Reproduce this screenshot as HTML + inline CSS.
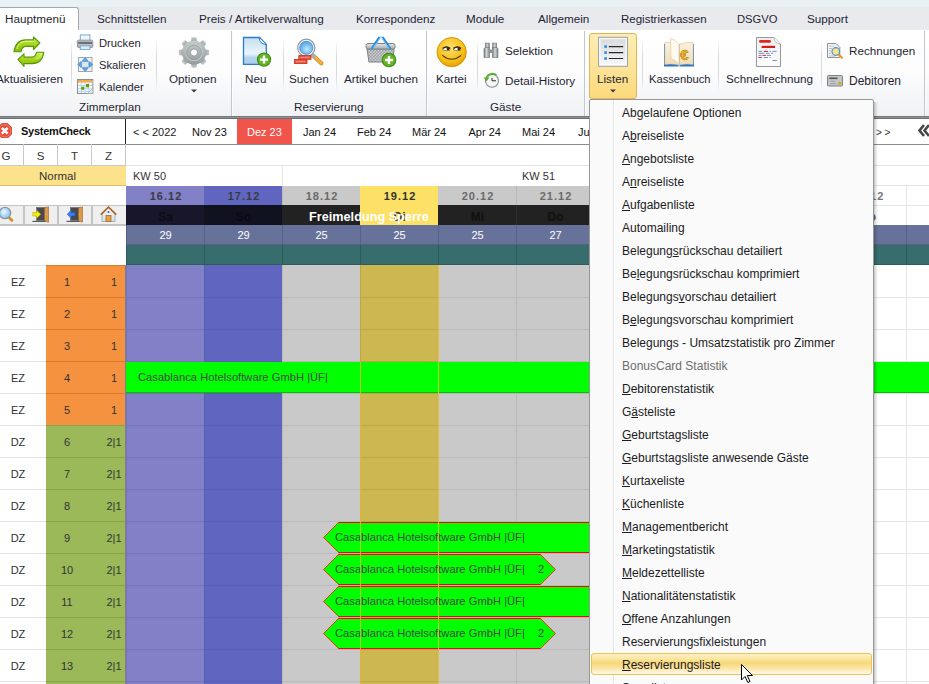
<!DOCTYPE html>
<html><head><meta charset="utf-8">
<style>
*{box-sizing:border-box;margin:0;padding:0}
html,body{width:929px;height:684px;overflow:hidden;background:#fff;font-family:"Liberation Sans",sans-serif;color:#2b2b33;position:relative}
.a{position:absolute;white-space:nowrap}
#topbar{left:0;top:0;width:929px;height:7px;background:#eaf1f5}
#tabs{left:0;top:7px;width:929px;height:24px;background:#e8eaee;border-bottom:1px solid #a9aeb4}
.tab{top:7px;font-size:11.7px;line-height:23px;color:#1f1f33}
#acttab{left:-1px;top:7px;width:80px;height:25px;background:#fff;border:1px solid #a3a9b0;border-bottom:none;border-radius:0 3px 0 0}
#ribbon{left:0;top:30px;width:929px;height:87px;background:linear-gradient(#fff 0%,#fcfcfd 50%,#eff1f4 100%)}
#ribline{left:0;top:116px;width:929px;height:3px;background:linear-gradient(#74777b 0,#74777b 33%,#8f9296 33%,#8f9296 66%,#6a6d71 66%)}
.rt{font-size:11.7px;color:#1f1f33}
.gl{font-size:11.7px;color:#1f1f33;top:100px}
.sep{width:1px;background:linear-gradient(rgba(200,203,208,0),#d8dadd 30%,#d8dadd 70%,rgba(200,203,208,0))}
.gsep{width:2px;top:31px;height:85px;background:linear-gradient(90deg,#c3c7cc 50%,#fbfcfd 50%)}


.dt{top:186px;height:19px;font-size:11px;font-weight:bold;line-height:21px;text-align:center;letter-spacing:1px;text-indent:1px}
.dy{top:205px;height:20px;font-size:12px;font-weight:bold;line-height:24px;text-align:center}
.nm{top:225px;height:20px;background:#67729a;border-left:1px solid #56618a;color:#fff;font-size:11px;line-height:21px;text-align:center}
.tl{top:245px;height:20px;background:#376d6c;border-left:1px solid #2b5b5a}
.lt{height:32px;line-height:34px;font-size:11px;color:#333;width:36px;text-align:center}
.hd{top:144px;height:21px;line-height:24px;font-size:11.5px;color:#333;text-align:center;width:34px;border-left:1px solid #c9c9c9}
.nv{top:124px;font-size:11px;color:#111;line-height:16px}
.mi{left:622px;font-size:12px;color:#1b1b23;line-height:16px}
.mi u{text-decoration:underline;text-decoration-thickness:1px;text-underline-offset:0.6px}
.bar{height:31px;background:#00ff00;font-size:11.2px;color:#474747;line-height:30px}
</style></head><body>

<div class="a" id="topbar"></div>
<div class="a" id="tabs"></div>
<div class="a" id="acttab"></div>
<div class="a tab" style="left:5px">Hauptmenü</div>
<div class="a tab" style="left:97px">Schnittstellen</div>
<div class="a tab" style="left:199px">Preis / Artikelverwaltung</div>
<div class="a tab" style="left:356px">Korrespondenz</div>
<div class="a tab" style="left:466px">Module</div>
<div class="a tab" style="left:538px">Allgemein</div>
<div class="a tab" style="left:621px;font-size:11.5px;line-height:24.5px">Registrierkassen</div>
<div class="a tab" style="left:737px;font-size:11.2px;line-height:24.5px">DSGVO</div>
<div class="a tab" style="left:807px">Support</div>

<div class="a" id="ribbon"></div>
<div class="a" id="ribline"></div>


<!-- Zimmerplan group -->
<svg class="a" style="left:10px;top:32px" width="40" height="40" viewBox="0 0 40 40">
<defs><linearGradient id="gr" x1="0" y1="0" x2="0" y2="1"><stop offset="0" stop-color="#d6f06a"/><stop offset="0.5" stop-color="#a9d21a"/><stop offset="1" stop-color="#86b80c"/></linearGradient></defs>
<path d="M4,19.8 C5,12 9,8 16,7.9 L23.5,7.9 L23.5,5 L29.8,11 L23.5,17.5 L23.5,14.4 L16,14.4 C13,14.4 11.5,16.5 11,19.8 Z" fill="url(#gr)" stroke="#4f9a06" stroke-width="1.1" stroke-linejoin="round"/>
<path d="M33.8,20.2 C33,27 29,31.6 22,31.6 L14,31.6 L14,34.5 L8,27.5 L14,21.9 L14,25.1 L22,25.1 C24.5,25.1 26,23 26.6,20.2 Z" fill="url(#gr)" stroke="#4f9a06" stroke-width="1.1" stroke-linejoin="round"/>
<path d="M7,17 C8,12 11,9.5 16,9.3 L24,9.3" stroke="#e8f8a8" stroke-width="1" fill="none" opacity="0.8"/>
<path d="M31.5,21.5 C31,24 29.5,26 26,26.5" stroke="#e8f8a8" stroke-width="1" fill="none" opacity="0.7"/>
</svg>
<div class="a rt" style="left:-4px;top:72px">Aktualisieren</div>
<div class="a sep" style="left:71px;top:40px;height:52px"></div>
<svg class="a" style="left:76px;top:34px" width="18" height="16" viewBox="0 0 18 16">
<defs><linearGradient id="gp" x1="0" y1="0" x2="0" y2="1"><stop offset="0" stop-color="#e6e8ea"/><stop offset="1" stop-color="#a4a9ad"/></linearGradient></defs>
<rect x="4.3" y="0.9" width="9.6" height="6" fill="#eef6fd" stroke="#7fa9d6" stroke-width="1"/>
<rect x="1.4" y="6.2" width="15.4" height="7.2" rx="1" fill="url(#gp)" stroke="#8d9296" stroke-width="1"/>
<rect x="2.2" y="7.6" width="13.8" height="2.4" fill="#6d7276"/>
<rect x="4.3" y="11.8" width="9.6" height="3.8" fill="#dcecfa" stroke="#7fa9d6" stroke-width="1"/>
</svg>
<div class="a rt" style="left:99px;top:37px;font-size:11.2px">Drucken</div>
<svg class="a" style="left:76px;top:56px" width="18" height="16" viewBox="0 0 18 16">
<rect x="2.5" y="1.5" width="13.5" height="14" fill="#f1f2f3" stroke="#a3a7ab" stroke-width="1"/>
<rect x="6" y="5" width="6.5" height="7" fill="#dfe6ec"/>
<path d="M9.2,1.6 L12,4.6 V5.6 H6.4 V4.6 Z M9.2,15.4 L12,12.4 V11.4 H6.4 V12.4 Z M1.6,8.5 L4.6,5.7 H5.6 V11.3 H4.6 Z M16.8,8.5 L13.8,5.7 H12.8 V11.3 H13.8 Z" fill="#5ba4e4" stroke="#3d84c6" stroke-width="0.5" stroke-linejoin="round"/>
</svg>
<div class="a rt" style="left:99px;top:59px;font-size:11.2px">Skalieren</div>
<svg class="a" style="left:76px;top:78px" width="18" height="17" viewBox="0 0 18 17">
<rect x="1.5" y="1.5" width="15.3" height="14" fill="#f7fafd" stroke="#8a9096" stroke-width="1"/>
<rect x="2" y="2" width="14.3" height="2.6" fill="#f7a84c"/>
<path d="M2,7.5 H16.3 M2,10.8 H16.3 M2,13.5 H16.3 M5.3,4.6 V15 M9,4.6 V15 M12.7,4.6 V15" stroke="#b9d5ea" stroke-width="1"/>
<rect x="5.2" y="8.7" width="3" height="3" fill="#5c9e0c"/>
<rect x="10" y="6" width="3" height="3.3" fill="#5c9e0c"/>
<path d="M11.5,15.5 L16.8,10.2 V15.5 Z" fill="#dfe7ef" stroke="#9aa3ab" stroke-width="0.6"/>
</svg>
<div class="a rt" style="left:99px;top:81px;font-size:11.2px">Kalender</div>
<div class="a sep" style="left:156px;top:40px;height:52px"></div>
<svg class="a" style="left:178px;top:35.5px" width="32" height="33" viewBox="0 0 32 32">
<defs><linearGradient id="gg" x1="0" y1="0" x2="0" y2="1"><stop offset="0" stop-color="#c4cbcb"/><stop offset="1" stop-color="#939b9c"/></linearGradient></defs>
<g fill="url(#gg)"><path d="M12.8,6 L13.6,0.8 H18.4 L19.2,6 Z" transform="rotate(0 16 16)"/><path d="M12.8,6 L13.6,0.8 H18.4 L19.2,6 Z" transform="rotate(45 16 16)"/><path d="M12.8,6 L13.6,0.8 H18.4 L19.2,6 Z" transform="rotate(90 16 16)"/><path d="M12.8,6 L13.6,0.8 H18.4 L19.2,6 Z" transform="rotate(135 16 16)"/><path d="M12.8,6 L13.6,0.8 H18.4 L19.2,6 Z" transform="rotate(180 16 16)"/><path d="M12.8,6 L13.6,0.8 H18.4 L19.2,6 Z" transform="rotate(225 16 16)"/><path d="M12.8,6 L13.6,0.8 H18.4 L19.2,6 Z" transform="rotate(270 16 16)"/><path d="M12.8,6 L13.6,0.8 H18.4 L19.2,6 Z" transform="rotate(315 16 16)"/><circle cx="16" cy="16" r="12"/></g>
<circle cx="16" cy="16" r="8.3" fill="none" stroke="#c3caca" stroke-width="1.1"/>
<circle cx="16" cy="16" r="7.3" fill="none" stroke="#939b9b" stroke-width="0.7"/>
<circle cx="16" cy="16" r="3.6" fill="#fff" stroke="#858d8e" stroke-width="0.8"/>
</svg>
<div class="a rt" style="left:169px;top:72px">Optionen</div>
<svg class="a" style="left:191px;top:89px" width="6" height="4"><path d="M0,0.5 H6 L3,3.5 Z" fill="#3a3f48"/></svg>
<div class="a gl" style="left:79px">Zimmerplan</div>
<div class="a gsep" style="left:231px"></div>

<!-- Reservierung -->
<svg class="a" style="left:242px;top:36px" width="31" height="31" viewBox="0 0 31 31">
<defs><linearGradient id="gd" x1="0" y1="0" x2="0" y2="1"><stop offset="0" stop-color="#c4def0"/><stop offset="0.6" stop-color="#eaf5fb"/><stop offset="0.75" stop-color="#b3d5ec"/><stop offset="1" stop-color="#a9cfea"/></linearGradient></defs>
<path d="M1.5,1.5 H17.5 L24.3,8.3 V28.3 H1.5 Z" fill="url(#gd)" stroke="#2b7dcc" stroke-width="1.3"/>
<path d="M17.3,2 Q17.5,8 24,8.4" fill="#f4f9fd" stroke="#2b7dcc" stroke-width="1"/>
<circle cx="22" cy="23.6" r="6.6" fill="#62b424" stroke="#3c8a12" stroke-width="1.1"/>
<path d="M22,19.6 V27.6 M18,23.6 H26" stroke="#fff" stroke-width="2.4"/>
</svg>
<div class="a rt" style="left:245px;top:72px">Neu</div>
<div class="a sep" style="left:283px;top:40px;height:52px"></div>
<svg class="a" style="left:292px;top:36px" width="32" height="30" viewBox="0 0 32 30">
<defs><radialGradient id="gs" cx="0.55" cy="0.6" r="0.6"><stop offset="0" stop-color="#bfe8ff"/><stop offset="1" stop-color="#4f9fe2"/></radialGradient></defs>
<path d="M21,19.5 L29.3,27.3" stroke="#c8891c" stroke-width="4" stroke-linecap="round"/>
<path d="M21,19.5 L29.3,27.3" stroke="#f4b23c" stroke-width="2.6" stroke-linecap="round"/>
<path d="M19.5,18 L23,21.5" stroke="#a9afb3" stroke-width="4"/>
<circle cx="14.3" cy="11.8" r="8.6" fill="#fafafa" stroke="#8f969b" stroke-width="1.2"/>
<circle cx="14.3" cy="11.8" r="6.6" fill="url(#gs)" stroke="#3d8bd2" stroke-width="0.8"/>
<rect x="6.8" y="19.6" width="12.2" height="3.7" fill="#ec5846" stroke="#c2301f" stroke-width="0.8"/>
<rect x="2.4" y="23.4" width="12.6" height="4.2" fill="#ec5846" stroke="#c2301f" stroke-width="0.8"/>
<path d="M8.5,21.4 H17 M4,25.5 H13" stroke="#ff9a8a" stroke-width="0.7"/>
</svg>
<div class="a rt" style="left:289px;top:72px">Suchen</div>
<div class="a sep" style="left:336px;top:40px;height:52px"></div>
<svg class="a" style="left:364px;top:35px" width="34" height="34" viewBox="0 0 34 34">
<defs><pattern id="chk" width="3" height="3" patternUnits="userSpaceOnUse"><rect width="3" height="3" fill="#c9cccf"/><rect width="1.5" height="1.5" fill="#9da2a6"/><rect x="1.5" y="1.5" width="1.5" height="1.5" fill="#9da2a6"/></pattern>
<linearGradient id="rim" x1="0" y1="0" x2="0" y2="1"><stop offset="0" stop-color="#e4e6e8"/><stop offset="1" stop-color="#a9aeb2"/></linearGradient></defs>
<path d="M15.5,2 L7,14 M18.5,2 L27,14" stroke="#2d8ee0" stroke-width="1.6"/>
<path d="M16.8,1.5 L8.8,13.6 M17.2,1.5 L25.2,13.6" stroke="#8cc8f4" stroke-width="0.8"/>
<path d="M3,14 H30 L28.6,27 H5 Z" fill="url(#chk)" stroke="#7d8387" stroke-width="1"/>
<rect x="2" y="8.5" width="29" height="5.5" rx="2" fill="url(#rim)" stroke="#7d8387" stroke-width="1"/>
<path d="M15.3,2 L7.3,14 M18.7,2 L26.7,14" stroke="#2d8ee0" stroke-width="1.7"/><path d="M16.6,2.5 L9.4,13.5 M17.4,2.5 L24.6,13.5" stroke="#7cc0f2" stroke-width="0.9"/>
<circle cx="25" cy="25" r="6.8" fill="#62b424" stroke="#3c8a12" stroke-width="1.1"/>
<path d="M25,21 V29 M21,25 H29" stroke="#fff" stroke-width="2.4"/>
</svg>
<div class="a rt" style="left:344px;top:72px">Artikel buchen</div>
<div class="a gl" style="left:294px">Reservierung</div>
<div class="a gsep" style="left:426px"></div>

<!-- Gaeste -->
<svg class="a" style="left:436px;top:36px" width="32" height="32" viewBox="0 0 32 32">
<defs><radialGradient id="gy" cx="0.45" cy="0.35" r="0.75"><stop offset="0" stop-color="#ffe170"/><stop offset="0.6" stop-color="#f6bf16"/><stop offset="1" stop-color="#e09400"/></radialGradient></defs>
<circle cx="15.7" cy="16.1" r="14.6" fill="url(#gy)" stroke="#d08a00" stroke-width="0.9"/>
<path d="M6.8,12.2 Q10.5,9.4 14,12.2 L13.8,14.3 Q10.5,15.3 6.8,14 Z" fill="#fff" stroke="#6b4a00" stroke-width="0.6"/>
<path d="M17.6,12.2 Q21.3,9.4 24.8,12.2 L24.6,14.3 Q21.3,15.3 17.6,14 Z" fill="#fff" stroke="#6b4a00" stroke-width="0.6"/>
<path d="M6.8,12.4 Q10.5,9.6 14,12.4" stroke="#3b2700" stroke-width="1.5" fill="none"/>
<path d="M17.6,12.4 Q21.3,9.6 24.8,12.4" stroke="#3b2700" stroke-width="1.5" fill="none"/>
<circle cx="12" cy="13" r="1.4" fill="#3b2700"/><circle cx="22.8" cy="13" r="1.4" fill="#3b2700"/>
<path d="M6.8,19.6 Q15.7,27 24.6,19.6" stroke="#5a3a00" stroke-width="1.1" fill="none"/>
<path d="M5.8,18.8 L7.4,20.3 M25.6,18.8 L24,20.3" stroke="#5a3a00" stroke-width="0.8"/>
</svg>
<div class="a rt" style="left:436px;top:72px">Kartei</div>
<div class="a sep" style="left:477px;top:40px;height:52px"></div>
<svg class="a" style="left:483px;top:42px" width="16" height="17" viewBox="0 0 16 17">
<defs><linearGradient id="gb" x1="0" y1="0" x2="1" y2="0"><stop offset="0" stop-color="#6e7478"/><stop offset="0.45" stop-color="#d6dadc"/><stop offset="1" stop-color="#7a8084"/></linearGradient></defs>
<rect x="2.3" y="1" width="4" height="5.5" fill="url(#gb)" stroke="#6a7074" stroke-width="0.5"/>
<rect x="9.7" y="1" width="4" height="5.5" fill="url(#gb)" stroke="#6a7074" stroke-width="0.5"/>
<path d="M1,6.5 L2,5.5 H6.5 V15.5 H1 Z" fill="url(#gb)" stroke="#6a7074" stroke-width="0.6"/>
<path d="M15,6.5 L14,5.5 H9.5 V15.5 H15 Z" fill="url(#gb)" stroke="#6a7074" stroke-width="0.6"/>
<rect x="6.5" y="7.5" width="3" height="3.5" fill="#8d9397"/>
<path d="M1.5,12 H6 M10,12 H14.5" stroke="#b9bdc0" stroke-width="0.8"/>
</svg>
<div class="a rt" style="left:505px;top:44px">Selektion</div>
<svg class="a" style="left:482px;top:72px" width="18" height="18" viewBox="0 0 18 18">
<circle cx="10" cy="8.8" r="6.5" fill="#f6f6f6" stroke="#878d91" stroke-width="1.1"/>
<path d="M10,8.8 H14 M10,8.8 V5.8" stroke="#2f2f2f" stroke-width="1"/>
<path d="M14.5,3.2 A6.6,6.6 0 0 0 4.6,5.4" stroke="#58b02a" stroke-width="2" fill="none"/>
<path d="M1.6,5.6 H7.4 L4.5,9.6 Z" fill="#58b02a"/>
</svg>
<div class="a rt" style="left:505px;top:74px">Detail-History</div>
<div class="a gl" style="left:490px">Gäste</div>
<div class="a gsep" style="left:584px"></div>

<!-- Listen group -->
<div class="a" style="left:589px;top:33px;width:48px;height:66px;border:1px solid #e2b45a;border-radius:3px;background:linear-gradient(#fdeeb5,#fde49a 50%,#fcd97c)"></div>
<svg class="a" style="left:597px;top:36px" width="32" height="32" viewBox="0 0 32 32">
<defs><linearGradient id="gl" x1="0" y1="0" x2="0" y2="1"><stop offset="0" stop-color="#d9dbde"/><stop offset="1" stop-color="#f6f6f7"/></linearGradient></defs>
<rect x="1.5" y="1.3" width="29" height="29" fill="#f2f2f3" stroke="#9ea3a8" stroke-width="1"/>
<rect x="3" y="2.8" width="26" height="26" fill="url(#gl)" stroke="#fdfdfd" stroke-width="0.8"/>
<rect x="7.3" y="9.3" width="2.6" height="2.6" fill="#2f8ae0"/><rect x="7.3" y="15.3" width="2.6" height="2.6" fill="#2f8ae0"/><rect x="7.3" y="21.2" width="2.6" height="2.6" fill="#2f8ae0"/>
<path d="M11.8,10.6 H26.2 M11.8,16.6 H26.2 M11.8,22.5 H26.2" stroke="#2a2a2a" stroke-width="1.1"/>
</svg>
<div class="a rt" style="left:597px;top:72px">Listen</div>
<svg class="a" style="left:610px;top:89px" width="6" height="4"><path d="M0,0.5 H6 L3,3.5 Z" fill="#3a3f48"/></svg>
<div class="a sep" style="left:642px;top:40px;height:52px"></div>
<svg class="a" style="left:662px;top:36px" width="34" height="32" viewBox="0 0 34 32">
<defs><linearGradient id="pg" x1="0" y1="0" x2="0" y2="1"><stop offset="0" stop-color="#fbf1dc"/><stop offset="1" stop-color="#eedcb6"/></linearGradient></defs>
<path d="M2,8 H16.5 V30.5 H2 Z" fill="#2c74c6"/><path d="M17.5,8 H32 V30.5 H17.5 Z" fill="#2c74c6"/>
<path d="M2.8,6.4 Q9,5.8 16.5,8.2 V29 Q9,27.4 2.8,28.6 Z" fill="url(#pg)" stroke="#d2b78a" stroke-width="0.5"/>
<path d="M31.2,6.4 Q25,5.8 17.5,8.2 V29 Q25,27.4 31.2,28.6 Z" fill="url(#pg)" stroke="#d2b78a" stroke-width="0.5"/>
<path d="M8.5,2.3 Q13.5,3.5 17,8.5 V28.5 Q13.5,24 9,22.5 Z" fill="#fffaf0" stroke="#d9c49e" stroke-width="0.6"/>
<text x="18.3" y="23.5" font-family="Liberation Sans" font-weight="bold" font-size="15" fill="#f1b624" stroke="#b57a0c" stroke-width="0.5">€</text>
</svg>
<div class="a rt" style="left:649px;top:73px;font-size:11.2px">Kassenbuch</div>
<div class="a sep" style="left:718px;top:40px;height:52px"></div>
<svg class="a" style="left:755px;top:36px" width="27" height="32" viewBox="0 0 27 32">
<defs><linearGradient id="gsr" x1="0" y1="0" x2="0" y2="1"><stop offset="0" stop-color="#f0f0f0"/><stop offset="1" stop-color="#fdfdfd"/></linearGradient></defs>
<path d="M1.5,1.5 H19 L25.5,8 V30.5 H1.5 Z" fill="url(#gsr)" stroke="#93999f" stroke-width="1"/>
<path d="M19,1.5 Q19.3,7.8 25.5,8" fill="#fafafa" stroke="#a9aeb3" stroke-width="0.8"/>
<rect x="4" y="4" width="12" height="2.8" rx="1.4" fill="#e0261e"/>
<rect x="6.6" y="9.8" width="13.5" height="2.2" fill="#d81e16"/>
<path d="M3.5,15.4 H7 M8.8,15.4 H12.8 M14.5,15.4 H16 M17.5,15.4 H21.5 M3.5,17.3 H9.5 M11,17.3 H14.5 M16,17.3 H18 M3.5,19.4 H6.5 M12,19.4 H16 M3.5,21.5 H7 M8.8,21.5 H13 M14.5,21.5 H15.8" stroke="#5e86b8" stroke-width="0.9"/>
<path d="M9,15.4 H12.8 M7.3,19.4 H11.2 M3.5,21.5 H6.2" stroke="#d9261c" stroke-width="0.9"/>
<path d="M17.5,24.5 H21.8" stroke="#5e86b8" stroke-width="0.9"/>
</svg>
<div class="a rt" style="left:726px;top:72px">Schnellrechnung</div>
<div class="a sep" style="left:821px;top:40px;height:52px"></div>
<svg class="a" style="left:826px;top:42px" width="18" height="17" viewBox="0 0 18 17">
<path d="M1.5,1.5 H10 L13.8,5.3 V15.5 H1.5 Z" fill="#f3f3f3" stroke="#8e949a" stroke-width="1"/>
<path d="M3,4 H8 M3,6.5 H6 M3,9 H5 M3,11.5 H5 M3,14 H9" stroke="#b6bbc0" stroke-width="0.9"/>
<path d="M12,12 L16,15.8" stroke="#e89a22" stroke-width="2.2" stroke-linecap="round"/>
<circle cx="9.8" cy="9.5" r="3.8" fill="#f8e38a" stroke="#4a90d8" stroke-width="1.2"/>
</svg>
<div class="a rt" style="left:849px;top:44px">Rechnungen</div>
<svg class="a" style="left:826px;top:74px" width="18" height="13" viewBox="0 0 18 13">
<rect x="1.5" y="1.5" width="15" height="10.5" rx="1" fill="#c3c6c8" stroke="#7d8285" stroke-width="1"/>
<path d="M3.3,4.3 H11.5" stroke="#4f5a48" stroke-width="1.6"/>
<path d="M4,7.3 H9 M4,9.6 H10" stroke="#9aa0a3" stroke-width="0.8"/>
<rect x="12.2" y="8" width="3" height="2.6" fill="#e0a21e"/>
</svg>
<div class="a rt" style="left:849px;top:74px;font-size:12px">Debitoren</div>
<div class="a gsep" style="left:924px"></div>





<!-- nav / left header -->
<div class="a" style="left:0;top:119px;width:929px;height:26px;background:#fff;border-bottom:1px solid #8c8c8c"></div>
<div class="a" style="left:125px;top:119px;width:1px;height:25px;background:#222"></div>
<svg class="a" style="left:-3.5px;top:122.8px" width="15.5" height="15.5" viewBox="0 0 16 16">
<path d="M5,0.5 H11 L15.5,5 V11 L11,15.5 H5 L0.5,11 V5 Z" fill="#e9503b" stroke="#c8382a" stroke-width="0.8"/>
<path d="M5.5,1.8 H10.5 L14.2,5.5 V10.5 L10.5,14.2 H5.5 L1.8,10.5 V5.5 Z" fill="none" stroke="#f58a78" stroke-width="0.7"/>
<path d="M5,5 L11,11 M11,5 L5,11" stroke="#fff" stroke-width="2.6"/>
</svg>
<div class="a" style="left:21px;top:123px;font-size:11px;font-weight:bold;color:#111;line-height:16px;letter-spacing:-0.25px">SystemCheck</div>
<div class="a nv" style="left:133px;color:#222">&lt; &lt; 2022</div>
<div class="a nv" style="left:192px">Nov 23</div>
<div class="a" style="left:237px;top:119px;width:55px;height:25px;background:#f0544a"></div>
<div class="a nv" style="left:247px;color:#fff">Dez 23</div>
<div class="a nv" style="left:303px">Jan 24</div>
<div class="a nv" style="left:357px">Feb 24</div>
<div class="a nv" style="left:412px">Mär 24</div>
<div class="a nv" style="left:468.5px">Apr 24</div>
<div class="a nv" style="left:522px">Mai 24</div>
<div class="a nv" style="left:578px">Jun 24</div>
<div class="a nv" style="left:876px;color:#333;font-size:10px;top:125px">&gt; &gt;</div>
<svg class="a" style="left:918px;top:124px" width="14" height="13" viewBox="0 0 14 13"><path d="M6,1 L1.5,6.5 L6,12 M11,1 L6.5,6.5 L11,12" stroke="#474747" stroke-width="2.6" fill="none"/></svg>

<div class="a" style="left:0;top:165px;width:929px;height:1px;background:#e3e3e3"></div>
<div class="a hd" style="left:-11px;border-left:none">G</div>
<div class="a hd" style="left:23px">S</div>
<div class="a hd" style="left:57px">T</div>
<div class="a hd" style="left:91px">Z</div>
<div class="a" style="left:125px;top:144px;width:1px;height:21px;background:#c9c9c9"></div>
<div class="a" style="left:0;top:144px;width:126px;height:22px;border-bottom:1px solid #c9c9c9"></div>
<div class="a" style="left:0;top:166px;width:126px;height:20px;background:#fde28c;border-bottom:1px solid #e0c060"></div>
<div class="a" style="left:0;top:167px;width:115px;font-size:11.5px;color:#333;line-height:19px;text-align:center">Normal</div>
<div class="a nv" style="left:133px;top:168px;color:#333">KW 50</div>
<div class="a" style="left:282px;top:165px;width:1px;height:20px;background:#e6e6e6"></div>
<div class="a nv" style="left:522px;top:168px;color:#333">KW 51</div>
<div class="a" style="left:0;top:205px;width:126px;height:21px;background:#efefef;border-top:1px solid #c4c4c4;border-bottom:2px solid #c4c4c4"></div>
<div class="a" style="left:23px;top:205px;width:2px;height:21px;background:#c4c4c4"></div>
<div class="a" style="left:57px;top:205px;width:2px;height:21px;background:#c4c4c4"></div>
<div class="a" style="left:91px;top:205px;width:2px;height:21px;background:#c4c4c4"></div>
<div class="a" style="left:0;top:265px;width:126px;height:1px;background:#e3e3e3"></div>

<div class="a" style="left:126px;top:265px;width:78px;height:419px;background:#8280c6;border-left:1px solid #7574b8"></div>
<div class="a dt" style="left:126px;width:78px;background:#8280c6;color:#3a3a44;border-left:1px solid #8280c6">16.12</div>
<div class="a dy" style="left:126px;width:78px;background:#17162a;color:#0c0c18;border-left:1px solid #17162a">Sa</div>
<div class="a nm" style="left:126px;width:78px">29</div>
<div class="a tl" style="left:126px;width:78px"></div>
<div class="a" style="left:204px;top:265px;width:78px;height:419px;background:#6066bf;border-left:1px solid #5a5fb0"></div>
<div class="a dt" style="left:204px;width:78px;background:#6066bf;color:#3a3a44;border-left:1px solid #6066bf">17.12</div>
<div class="a dy" style="left:204px;width:78px;background:#11121f;color:#0a0a14;border-left:1px solid #11121f">So</div>
<div class="a nm" style="left:204px;width:78px">29</div>
<div class="a tl" style="left:204px;width:78px"></div>
<div class="a" style="left:282px;top:265px;width:78px;height:419px;background:#c9c9c9;border-left:1px solid #b9b9b9"></div>
<div class="a dt" style="left:282px;width:78px;background:#c9c9c9;color:#6a6a6a;border-left:1px solid #b9b9b9">18.12</div>
<div class="a dy" style="left:282px;width:78px;background:#222;color:#111;border-left:1px solid #222">Mo</div>
<div class="a nm" style="left:282px;width:78px">25</div>
<div class="a tl" style="left:282px;width:78px"></div>
<div class="a" style="left:360px;top:265px;width:78px;height:419px;background:#cdb750;border-left:1px solid #bba746"></div>
<div class="a dt" style="left:360px;width:78px;background:#fde066;color:#333;border-left:1px solid #fde066">19.12</div>
<div class="a dy" style="left:360px;width:78px;background:#fde066;color:#3a3a30;border-left:1px solid #fde066">Di</div>
<div class="a nm" style="left:360px;width:78px">25</div>
<div class="a tl" style="left:360px;width:78px"></div>
<div class="a" style="left:438px;top:265px;width:78px;height:419px;background:#c9c9c9;border-left:1px solid #b9b9b9"></div>
<div class="a dt" style="left:438px;width:78px;background:#c9c9c9;color:#6a6a6a;border-left:1px solid #c9c9c9">20.12</div>
<div class="a dy" style="left:438px;width:78px;background:#222;color:#111;border-left:1px solid #222">Mi</div>
<div class="a nm" style="left:438px;width:78px">25</div>
<div class="a tl" style="left:438px;width:78px"></div>
<div class="a" style="left:516px;top:265px;width:78px;height:419px;background:#c9c9c9;border-left:1px solid #b9b9b9"></div>
<div class="a dt" style="left:516px;width:78px;background:#c9c9c9;color:#6a6a6a;border-left:1px solid #b9b9b9">21.12</div>
<div class="a dy" style="left:516px;width:78px;background:#222;color:#111;border-left:1px solid #2e2e2e">Do</div>
<div class="a nm" style="left:516px;width:78px">27</div>
<div class="a tl" style="left:516px;width:78px"></div>
<div class="a" style="left:594px;top:265px;width:78px;height:419px;background:#fff;border-left:1px solid #e6e6e6"></div>
<div class="a dt" style="left:594px;width:78px;background:#fff;color:#777;border-left:1px solid #e6e6e6">22.12</div>
<div class="a dy" style="left:594px;width:78px;background:#fff;color:#666;border-left:1px solid #e6e6e6">Fr</div>
<div class="a nm" style="left:594px;width:78px">27</div>
<div class="a tl" style="left:594px;width:78px"></div>
<div class="a" style="left:672px;top:265px;width:78px;height:419px;background:#fff;border-left:1px solid #e6e6e6"></div>
<div class="a dt" style="left:672px;width:78px;background:#fff;color:#777;border-left:1px solid #e6e6e6">23.12</div>
<div class="a dy" style="left:672px;width:78px;background:#fff;color:#666;border-left:1px solid #e6e6e6">Sa</div>
<div class="a nm" style="left:672px;width:78px">27</div>
<div class="a tl" style="left:672px;width:78px"></div>
<div class="a" style="left:750px;top:265px;width:78px;height:419px;background:#fff;border-left:1px solid #e6e6e6"></div>
<div class="a dt" style="left:750px;width:78px;background:#fff;color:#777;border-left:1px solid #e6e6e6">24.12</div>
<div class="a dy" style="left:750px;width:78px;background:#fff;color:#666;border-left:1px solid #e6e6e6">So</div>
<div class="a nm" style="left:750px;width:78px">27</div>
<div class="a tl" style="left:750px;width:78px"></div>
<div class="a" style="left:828px;top:265px;width:78px;height:419px;background:#fff;border-left:1px solid #e6e6e6"></div>
<div class="a dt" style="left:828px;width:78px;background:#fff;color:#777;border-left:1px solid #e6e6e6">25.12</div>
<div class="a dy" style="left:828px;width:78px;background:#fff;color:#666;border-left:1px solid #e6e6e6">Mo</div>
<div class="a nm" style="left:828px;width:78px">27</div>
<div class="a tl" style="left:828px;width:78px"></div>
<div class="a" style="left:906px;top:265px;width:78px;height:419px;background:#fff;border-left:1px solid #e6e6e6"></div>
<div class="a dt" style="left:906px;width:78px;background:#fff;color:#777;border-left:1px solid #e6e6e6">26.12</div>
<div class="a dy" style="left:906px;width:78px;background:#fff;color:#666;border-left:1px solid #e6e6e6">Di</div>
<div class="a nm" style="left:906px;width:78px">27</div>
<div class="a tl" style="left:906px;width:78px"></div>
<div class="a" style="left:126px;top:244px;width:803px;height:1px;background:#56617f"></div>
<div class="a" style="left:126px;top:264px;width:803px;height:1px;background:#2c5c5b"></div>
<div class="a" style="left:594px;top:185px;width:335px;height:1px;background:#e6e6e6"></div>
<div class="a" style="left:594px;top:205px;width:335px;height:1px;background:#e6e6e6"></div>
<div class="a" style="left:126px;top:297px;width:78px;height:1px;background:#7574b8"></div>
<div class="a" style="left:204px;top:297px;width:78px;height:1px;background:#5a5fb0"></div>
<div class="a" style="left:282px;top:297px;width:78px;height:1px;background:#b9b9b9"></div>
<div class="a" style="left:360px;top:297px;width:78px;height:1px;background:#bba746"></div>
<div class="a" style="left:438px;top:297px;width:78px;height:1px;background:#b9b9b9"></div>
<div class="a" style="left:516px;top:297px;width:78px;height:1px;background:#b9b9b9"></div>
<div class="a" style="left:594px;top:297px;width:78px;height:1px;background:#e6e6e6"></div>
<div class="a" style="left:672px;top:297px;width:78px;height:1px;background:#e6e6e6"></div>
<div class="a" style="left:750px;top:297px;width:78px;height:1px;background:#e6e6e6"></div>
<div class="a" style="left:828px;top:297px;width:78px;height:1px;background:#e6e6e6"></div>
<div class="a" style="left:906px;top:297px;width:78px;height:1px;background:#e6e6e6"></div>
<div class="a" style="left:126px;top:329px;width:78px;height:1px;background:#7574b8"></div>
<div class="a" style="left:204px;top:329px;width:78px;height:1px;background:#5a5fb0"></div>
<div class="a" style="left:282px;top:329px;width:78px;height:1px;background:#b9b9b9"></div>
<div class="a" style="left:360px;top:329px;width:78px;height:1px;background:#bba746"></div>
<div class="a" style="left:438px;top:329px;width:78px;height:1px;background:#b9b9b9"></div>
<div class="a" style="left:516px;top:329px;width:78px;height:1px;background:#b9b9b9"></div>
<div class="a" style="left:594px;top:329px;width:78px;height:1px;background:#e6e6e6"></div>
<div class="a" style="left:672px;top:329px;width:78px;height:1px;background:#e6e6e6"></div>
<div class="a" style="left:750px;top:329px;width:78px;height:1px;background:#e6e6e6"></div>
<div class="a" style="left:828px;top:329px;width:78px;height:1px;background:#e6e6e6"></div>
<div class="a" style="left:906px;top:329px;width:78px;height:1px;background:#e6e6e6"></div>
<div class="a" style="left:126px;top:361px;width:78px;height:1px;background:#7574b8"></div>
<div class="a" style="left:204px;top:361px;width:78px;height:1px;background:#5a5fb0"></div>
<div class="a" style="left:282px;top:361px;width:78px;height:1px;background:#b9b9b9"></div>
<div class="a" style="left:360px;top:361px;width:78px;height:1px;background:#bba746"></div>
<div class="a" style="left:438px;top:361px;width:78px;height:1px;background:#b9b9b9"></div>
<div class="a" style="left:516px;top:361px;width:78px;height:1px;background:#b9b9b9"></div>
<div class="a" style="left:594px;top:361px;width:78px;height:1px;background:#e6e6e6"></div>
<div class="a" style="left:672px;top:361px;width:78px;height:1px;background:#e6e6e6"></div>
<div class="a" style="left:750px;top:361px;width:78px;height:1px;background:#e6e6e6"></div>
<div class="a" style="left:828px;top:361px;width:78px;height:1px;background:#e6e6e6"></div>
<div class="a" style="left:906px;top:361px;width:78px;height:1px;background:#e6e6e6"></div>
<div class="a" style="left:126px;top:393px;width:78px;height:1px;background:#7574b8"></div>
<div class="a" style="left:204px;top:393px;width:78px;height:1px;background:#5a5fb0"></div>
<div class="a" style="left:282px;top:393px;width:78px;height:1px;background:#b9b9b9"></div>
<div class="a" style="left:360px;top:393px;width:78px;height:1px;background:#bba746"></div>
<div class="a" style="left:438px;top:393px;width:78px;height:1px;background:#b9b9b9"></div>
<div class="a" style="left:516px;top:393px;width:78px;height:1px;background:#b9b9b9"></div>
<div class="a" style="left:594px;top:393px;width:78px;height:1px;background:#e6e6e6"></div>
<div class="a" style="left:672px;top:393px;width:78px;height:1px;background:#e6e6e6"></div>
<div class="a" style="left:750px;top:393px;width:78px;height:1px;background:#e6e6e6"></div>
<div class="a" style="left:828px;top:393px;width:78px;height:1px;background:#e6e6e6"></div>
<div class="a" style="left:906px;top:393px;width:78px;height:1px;background:#e6e6e6"></div>
<div class="a" style="left:126px;top:425px;width:78px;height:1px;background:#7574b8"></div>
<div class="a" style="left:204px;top:425px;width:78px;height:1px;background:#5a5fb0"></div>
<div class="a" style="left:282px;top:425px;width:78px;height:1px;background:#b9b9b9"></div>
<div class="a" style="left:360px;top:425px;width:78px;height:1px;background:#bba746"></div>
<div class="a" style="left:438px;top:425px;width:78px;height:1px;background:#b9b9b9"></div>
<div class="a" style="left:516px;top:425px;width:78px;height:1px;background:#b9b9b9"></div>
<div class="a" style="left:594px;top:425px;width:78px;height:1px;background:#e6e6e6"></div>
<div class="a" style="left:672px;top:425px;width:78px;height:1px;background:#e6e6e6"></div>
<div class="a" style="left:750px;top:425px;width:78px;height:1px;background:#e6e6e6"></div>
<div class="a" style="left:828px;top:425px;width:78px;height:1px;background:#e6e6e6"></div>
<div class="a" style="left:906px;top:425px;width:78px;height:1px;background:#e6e6e6"></div>
<div class="a" style="left:126px;top:457px;width:78px;height:1px;background:#7574b8"></div>
<div class="a" style="left:204px;top:457px;width:78px;height:1px;background:#5a5fb0"></div>
<div class="a" style="left:282px;top:457px;width:78px;height:1px;background:#b9b9b9"></div>
<div class="a" style="left:360px;top:457px;width:78px;height:1px;background:#bba746"></div>
<div class="a" style="left:438px;top:457px;width:78px;height:1px;background:#b9b9b9"></div>
<div class="a" style="left:516px;top:457px;width:78px;height:1px;background:#b9b9b9"></div>
<div class="a" style="left:594px;top:457px;width:78px;height:1px;background:#e6e6e6"></div>
<div class="a" style="left:672px;top:457px;width:78px;height:1px;background:#e6e6e6"></div>
<div class="a" style="left:750px;top:457px;width:78px;height:1px;background:#e6e6e6"></div>
<div class="a" style="left:828px;top:457px;width:78px;height:1px;background:#e6e6e6"></div>
<div class="a" style="left:906px;top:457px;width:78px;height:1px;background:#e6e6e6"></div>
<div class="a" style="left:126px;top:489px;width:78px;height:1px;background:#7574b8"></div>
<div class="a" style="left:204px;top:489px;width:78px;height:1px;background:#5a5fb0"></div>
<div class="a" style="left:282px;top:489px;width:78px;height:1px;background:#b9b9b9"></div>
<div class="a" style="left:360px;top:489px;width:78px;height:1px;background:#bba746"></div>
<div class="a" style="left:438px;top:489px;width:78px;height:1px;background:#b9b9b9"></div>
<div class="a" style="left:516px;top:489px;width:78px;height:1px;background:#b9b9b9"></div>
<div class="a" style="left:594px;top:489px;width:78px;height:1px;background:#e6e6e6"></div>
<div class="a" style="left:672px;top:489px;width:78px;height:1px;background:#e6e6e6"></div>
<div class="a" style="left:750px;top:489px;width:78px;height:1px;background:#e6e6e6"></div>
<div class="a" style="left:828px;top:489px;width:78px;height:1px;background:#e6e6e6"></div>
<div class="a" style="left:906px;top:489px;width:78px;height:1px;background:#e6e6e6"></div>
<div class="a" style="left:126px;top:521px;width:78px;height:1px;background:#7574b8"></div>
<div class="a" style="left:204px;top:521px;width:78px;height:1px;background:#5a5fb0"></div>
<div class="a" style="left:282px;top:521px;width:78px;height:1px;background:#b9b9b9"></div>
<div class="a" style="left:360px;top:521px;width:78px;height:1px;background:#bba746"></div>
<div class="a" style="left:438px;top:521px;width:78px;height:1px;background:#b9b9b9"></div>
<div class="a" style="left:516px;top:521px;width:78px;height:1px;background:#b9b9b9"></div>
<div class="a" style="left:594px;top:521px;width:78px;height:1px;background:#e6e6e6"></div>
<div class="a" style="left:672px;top:521px;width:78px;height:1px;background:#e6e6e6"></div>
<div class="a" style="left:750px;top:521px;width:78px;height:1px;background:#e6e6e6"></div>
<div class="a" style="left:828px;top:521px;width:78px;height:1px;background:#e6e6e6"></div>
<div class="a" style="left:906px;top:521px;width:78px;height:1px;background:#e6e6e6"></div>
<div class="a" style="left:126px;top:553px;width:78px;height:1px;background:#7574b8"></div>
<div class="a" style="left:204px;top:553px;width:78px;height:1px;background:#5a5fb0"></div>
<div class="a" style="left:282px;top:553px;width:78px;height:1px;background:#b9b9b9"></div>
<div class="a" style="left:360px;top:553px;width:78px;height:1px;background:#bba746"></div>
<div class="a" style="left:438px;top:553px;width:78px;height:1px;background:#b9b9b9"></div>
<div class="a" style="left:516px;top:553px;width:78px;height:1px;background:#b9b9b9"></div>
<div class="a" style="left:594px;top:553px;width:78px;height:1px;background:#e6e6e6"></div>
<div class="a" style="left:672px;top:553px;width:78px;height:1px;background:#e6e6e6"></div>
<div class="a" style="left:750px;top:553px;width:78px;height:1px;background:#e6e6e6"></div>
<div class="a" style="left:828px;top:553px;width:78px;height:1px;background:#e6e6e6"></div>
<div class="a" style="left:906px;top:553px;width:78px;height:1px;background:#e6e6e6"></div>
<div class="a" style="left:126px;top:585px;width:78px;height:1px;background:#7574b8"></div>
<div class="a" style="left:204px;top:585px;width:78px;height:1px;background:#5a5fb0"></div>
<div class="a" style="left:282px;top:585px;width:78px;height:1px;background:#b9b9b9"></div>
<div class="a" style="left:360px;top:585px;width:78px;height:1px;background:#bba746"></div>
<div class="a" style="left:438px;top:585px;width:78px;height:1px;background:#b9b9b9"></div>
<div class="a" style="left:516px;top:585px;width:78px;height:1px;background:#b9b9b9"></div>
<div class="a" style="left:594px;top:585px;width:78px;height:1px;background:#e6e6e6"></div>
<div class="a" style="left:672px;top:585px;width:78px;height:1px;background:#e6e6e6"></div>
<div class="a" style="left:750px;top:585px;width:78px;height:1px;background:#e6e6e6"></div>
<div class="a" style="left:828px;top:585px;width:78px;height:1px;background:#e6e6e6"></div>
<div class="a" style="left:906px;top:585px;width:78px;height:1px;background:#e6e6e6"></div>
<div class="a" style="left:126px;top:617px;width:78px;height:1px;background:#7574b8"></div>
<div class="a" style="left:204px;top:617px;width:78px;height:1px;background:#5a5fb0"></div>
<div class="a" style="left:282px;top:617px;width:78px;height:1px;background:#b9b9b9"></div>
<div class="a" style="left:360px;top:617px;width:78px;height:1px;background:#bba746"></div>
<div class="a" style="left:438px;top:617px;width:78px;height:1px;background:#b9b9b9"></div>
<div class="a" style="left:516px;top:617px;width:78px;height:1px;background:#b9b9b9"></div>
<div class="a" style="left:594px;top:617px;width:78px;height:1px;background:#e6e6e6"></div>
<div class="a" style="left:672px;top:617px;width:78px;height:1px;background:#e6e6e6"></div>
<div class="a" style="left:750px;top:617px;width:78px;height:1px;background:#e6e6e6"></div>
<div class="a" style="left:828px;top:617px;width:78px;height:1px;background:#e6e6e6"></div>
<div class="a" style="left:906px;top:617px;width:78px;height:1px;background:#e6e6e6"></div>
<div class="a" style="left:126px;top:649px;width:78px;height:1px;background:#7574b8"></div>
<div class="a" style="left:204px;top:649px;width:78px;height:1px;background:#5a5fb0"></div>
<div class="a" style="left:282px;top:649px;width:78px;height:1px;background:#b9b9b9"></div>
<div class="a" style="left:360px;top:649px;width:78px;height:1px;background:#bba746"></div>
<div class="a" style="left:438px;top:649px;width:78px;height:1px;background:#b9b9b9"></div>
<div class="a" style="left:516px;top:649px;width:78px;height:1px;background:#b9b9b9"></div>
<div class="a" style="left:594px;top:649px;width:78px;height:1px;background:#e6e6e6"></div>
<div class="a" style="left:672px;top:649px;width:78px;height:1px;background:#e6e6e6"></div>
<div class="a" style="left:750px;top:649px;width:78px;height:1px;background:#e6e6e6"></div>
<div class="a" style="left:828px;top:649px;width:78px;height:1px;background:#e6e6e6"></div>
<div class="a" style="left:906px;top:649px;width:78px;height:1px;background:#e6e6e6"></div>
<div class="a" style="left:126px;top:681px;width:78px;height:1px;background:#7574b8"></div>
<div class="a" style="left:204px;top:681px;width:78px;height:1px;background:#5a5fb0"></div>
<div class="a" style="left:282px;top:681px;width:78px;height:1px;background:#b9b9b9"></div>
<div class="a" style="left:360px;top:681px;width:78px;height:1px;background:#bba746"></div>
<div class="a" style="left:438px;top:681px;width:78px;height:1px;background:#b9b9b9"></div>
<div class="a" style="left:516px;top:681px;width:78px;height:1px;background:#b9b9b9"></div>
<div class="a" style="left:594px;top:681px;width:78px;height:1px;background:#e6e6e6"></div>
<div class="a" style="left:672px;top:681px;width:78px;height:1px;background:#e6e6e6"></div>
<div class="a" style="left:750px;top:681px;width:78px;height:1px;background:#e6e6e6"></div>
<div class="a" style="left:828px;top:681px;width:78px;height:1px;background:#e6e6e6"></div>
<div class="a" style="left:906px;top:681px;width:78px;height:1px;background:#e6e6e6"></div>
<div class="a lt" style="left:0;top:265px">EZ</div>
<div class="a" style="left:46px;top:265px;width:79px;height:32px;background:#f5923f;border-top:1px solid #d97a2c"></div>
<div class="a lt" style="left:46px;top:265px;width:42px">1</div>
<div class="a lt" style="left:94px;top:265px;width:40px;text-align:center">1</div>
<div class="a" style="left:0;top:265px;width:46px;height:1px;background:#e3e3e3"></div>
<div class="a lt" style="left:0;top:297px">EZ</div>
<div class="a" style="left:46px;top:297px;width:79px;height:32px;background:#f5923f;border-top:1px solid #d97a2c"></div>
<div class="a lt" style="left:46px;top:297px;width:42px">2</div>
<div class="a lt" style="left:94px;top:297px;width:40px;text-align:center">1</div>
<div class="a" style="left:0;top:297px;width:46px;height:1px;background:#e3e3e3"></div>
<div class="a lt" style="left:0;top:329px">EZ</div>
<div class="a" style="left:46px;top:329px;width:79px;height:32px;background:#f5923f;border-top:1px solid #d97a2c"></div>
<div class="a lt" style="left:46px;top:329px;width:42px">3</div>
<div class="a lt" style="left:94px;top:329px;width:40px;text-align:center">1</div>
<div class="a" style="left:0;top:329px;width:46px;height:1px;background:#e3e3e3"></div>
<div class="a lt" style="left:0;top:361px">EZ</div>
<div class="a" style="left:46px;top:361px;width:79px;height:32px;background:#f5923f;border-top:1px solid #d97a2c"></div>
<div class="a lt" style="left:46px;top:361px;width:42px">4</div>
<div class="a lt" style="left:94px;top:361px;width:40px;text-align:center">1</div>
<div class="a" style="left:0;top:361px;width:46px;height:1px;background:#e3e3e3"></div>
<div class="a lt" style="left:0;top:393px">EZ</div>
<div class="a" style="left:46px;top:393px;width:79px;height:32px;background:#f5923f;border-top:1px solid #d97a2c"></div>
<div class="a lt" style="left:46px;top:393px;width:42px">5</div>
<div class="a lt" style="left:94px;top:393px;width:40px;text-align:center">1</div>
<div class="a" style="left:0;top:393px;width:46px;height:1px;background:#e3e3e3"></div>
<div class="a lt" style="left:0;top:425px">DZ</div>
<div class="a" style="left:46px;top:425px;width:79px;height:32px;background:#9cb95a;border-top:1px solid #86a448"></div>
<div class="a lt" style="left:46px;top:425px;width:42px">6</div>
<div class="a lt" style="left:94px;top:425px;width:40px;text-align:center">2|1</div>
<div class="a" style="left:0;top:425px;width:46px;height:1px;background:#e3e3e3"></div>
<div class="a lt" style="left:0;top:457px">DZ</div>
<div class="a" style="left:46px;top:457px;width:79px;height:32px;background:#9cb95a;border-top:1px solid #86a448"></div>
<div class="a lt" style="left:46px;top:457px;width:42px">7</div>
<div class="a lt" style="left:94px;top:457px;width:40px;text-align:center">2|1</div>
<div class="a" style="left:0;top:457px;width:46px;height:1px;background:#e3e3e3"></div>
<div class="a lt" style="left:0;top:489px">DZ</div>
<div class="a" style="left:46px;top:489px;width:79px;height:32px;background:#9cb95a;border-top:1px solid #86a448"></div>
<div class="a lt" style="left:46px;top:489px;width:42px">8</div>
<div class="a lt" style="left:94px;top:489px;width:40px;text-align:center">2|1</div>
<div class="a" style="left:0;top:489px;width:46px;height:1px;background:#e3e3e3"></div>
<div class="a lt" style="left:0;top:521px">DZ</div>
<div class="a" style="left:46px;top:521px;width:79px;height:32px;background:#9cb95a;border-top:1px solid #86a448"></div>
<div class="a lt" style="left:46px;top:521px;width:42px">9</div>
<div class="a lt" style="left:94px;top:521px;width:40px;text-align:center">2|1</div>
<div class="a" style="left:0;top:521px;width:46px;height:1px;background:#e3e3e3"></div>
<div class="a lt" style="left:0;top:553px">DZ</div>
<div class="a" style="left:46px;top:553px;width:79px;height:32px;background:#9cb95a;border-top:1px solid #86a448"></div>
<div class="a lt" style="left:46px;top:553px;width:42px">10</div>
<div class="a lt" style="left:94px;top:553px;width:40px;text-align:center">2|1</div>
<div class="a" style="left:0;top:553px;width:46px;height:1px;background:#e3e3e3"></div>
<div class="a lt" style="left:0;top:585px">DZ</div>
<div class="a" style="left:46px;top:585px;width:79px;height:32px;background:#9cb95a;border-top:1px solid #86a448"></div>
<div class="a lt" style="left:46px;top:585px;width:42px">11</div>
<div class="a lt" style="left:94px;top:585px;width:40px;text-align:center">2|1</div>
<div class="a" style="left:0;top:585px;width:46px;height:1px;background:#e3e3e3"></div>
<div class="a lt" style="left:0;top:617px">DZ</div>
<div class="a" style="left:46px;top:617px;width:79px;height:32px;background:#9cb95a;border-top:1px solid #86a448"></div>
<div class="a lt" style="left:46px;top:617px;width:42px">12</div>
<div class="a lt" style="left:94px;top:617px;width:40px;text-align:center">2|1</div>
<div class="a" style="left:0;top:617px;width:46px;height:1px;background:#e3e3e3"></div>
<div class="a lt" style="left:0;top:649px">DZ</div>
<div class="a" style="left:46px;top:649px;width:79px;height:32px;background:#9cb95a;border-top:1px solid #86a448"></div>
<div class="a lt" style="left:46px;top:649px;width:42px">13</div>
<div class="a lt" style="left:94px;top:649px;width:40px;text-align:center">2|1</div>
<div class="a" style="left:0;top:649px;width:46px;height:1px;background:#e3e3e3"></div>
<div class="a lt" style="left:0;top:681px">DZ</div>
<div class="a" style="left:46px;top:681px;width:79px;height:32px;background:#9cb95a;border-top:1px solid #86a448"></div>
<div class="a lt" style="left:46px;top:681px;width:42px">14</div>
<div class="a lt" style="left:94px;top:681px;width:40px;text-align:center">2|1</div>
<div class="a" style="left:0;top:681px;width:46px;height:1px;background:#e3e3e3"></div>

<svg class="a" style="left:-2px;top:206px" width="16" height="17" viewBox="0 0 16 17">
<defs><radialGradient id="mg" cx="0.4" cy="0.4" r="0.6"><stop offset="0" stop-color="#e8f6ff"/><stop offset="1" stop-color="#8cc4ee"/></radialGradient></defs>
<path d="M10.5,11 L14,14.5" stroke="#d98a20" stroke-width="2.6" stroke-linecap="round"/>
<circle cx="7" cy="7" r="5.6" fill="url(#mg)" stroke="#8a98a4" stroke-width="1.4"/>
</svg>
<svg class="a" style="left:32px;top:206px" width="18" height="17" viewBox="0 0 18 17">
<rect x="4.5" y="1.5" width="9" height="13" fill="#4a4a4e" stroke="#6a6a6a" stroke-width="0.6"/>
<path d="M12.5,2 L16.5,0.8 V16.2 L12.5,15 Z" fill="#d99a50" stroke="#9a6224" stroke-width="0.6"/>
<circle cx="13.6" cy="8.5" r="0.6" fill="#f5d020"/>
<path d="M0.8,6.6 H4.5 V4 L8.8,8.3 L4.5,12.6 V10 H0.8 Z" fill="#f2ee10" stroke="#a8a000" stroke-width="0.5"/>
<rect x="0.5" y="14.8" width="13" height="1.2" fill="#5a5a5a"/>
</svg>
<svg class="a" style="left:66px;top:206px" width="18" height="17" viewBox="0 0 18 17">
<rect x="4.5" y="1.5" width="9" height="13" fill="#4a4a4e" stroke="#6a6a6a" stroke-width="0.6"/>
<path d="M12.5,2 L16.5,0.8 V16.2 L12.5,15 Z" fill="#d99a50" stroke="#9a6224" stroke-width="0.6"/>
<circle cx="13.6" cy="8.5" r="0.6" fill="#f5d020"/>
<path d="M9.2,6.6 H5.5 V4 L1.2,8.3 L5.5,12.6 V10 H9.2 Z" fill="#3a7ef0" stroke="#1a48b0" stroke-width="0.5"/>
<rect x="0.5" y="14.8" width="13" height="1.2" fill="#5a5a5a"/>
</svg>
<svg class="a" style="left:100px;top:206px" width="17" height="17" viewBox="0 0 17 17">
<defs><linearGradient id="hw" x1="0" y1="0" x2="0" y2="1"><stop offset="0" stop-color="#ffffff"/><stop offset="1" stop-color="#d8dde2"/></linearGradient></defs>
<path d="M8.5,1.5 L15,7.8 V15.5 H2 V7.8 Z" fill="url(#hw)" stroke="#9aa0a6" stroke-width="0.8"/>
<path d="M0.8,8.6 L8.5,1.2 L16.2,8.6" stroke="#a8641e" stroke-width="1.6" fill="none"/>
<rect x="6" y="9.5" width="5" height="6" fill="#e7a33c" stroke="#9a6020" stroke-width="0.7"/>
<circle cx="8.5" cy="6" r="1.1" fill="#2a66d0"/>
</svg>

<div class="a" style="left:125px;top:265px;width:1px;height:419px;background:#867c92"></div>
<div class="a bar" style="left:126px;top:362px;width:803px;padding-left:12px;border-bottom:1px solid #00c000">Casablanca Hotelsoftware GmbH |ÜF|</div>
<svg class="a" style="left:323px;top:522px" width="283" height="31" viewBox="0 0 283 31"><polygon points="0.5,15.5 15.5,0.5 283,0.5 283,30.5 15.5,30.5" fill="#00ff00" stroke="#f03a10" stroke-width="1"/><path d="M15.5,0.5 H283 M15.5,30.5 H283" stroke="#ff0000" stroke-width="1.2"/></svg><div class="a bar" style="left:335px;top:522px;background:none">Casablanca Hotelsoftware GmbH |ÜF|</div><svg class="a" style="left:323px;top:554px" width="233" height="31" viewBox="0 0 233 31"><polygon points="0.5,15.5 15.5,0.5 217.5,0.5 232.5,15.5 217.5,30.5 15.5,30.5" fill="#00ff00" stroke="#f03a10" stroke-width="1"/><path d="M15.5,0.5 H217.5 M15.5,30.5 H217.5" stroke="#ff0000" stroke-width="1.2"/></svg><div class="a bar" style="left:335px;top:554px;background:none">Casablanca Hotelsoftware GmbH |ÜF|</div><div class="a bar" style="left:538px;top:554px;background:none">2</div><svg class="a" style="left:323px;top:586px" width="283" height="31" viewBox="0 0 283 31"><polygon points="0.5,15.5 15.5,0.5 283,0.5 283,30.5 15.5,30.5" fill="#00ff00" stroke="#f03a10" stroke-width="1"/><path d="M15.5,0.5 H283 M15.5,30.5 H283" stroke="#ff0000" stroke-width="1.2"/></svg><div class="a bar" style="left:335px;top:586px;background:none">Casablanca Hotelsoftware GmbH |ÜF|</div><svg class="a" style="left:323px;top:618px" width="233" height="31" viewBox="0 0 233 31"><polygon points="0.5,15.5 15.5,0.5 217.5,0.5 232.5,15.5 217.5,30.5 15.5,30.5" fill="#00ff00" stroke="#f03a10" stroke-width="1"/><path d="M15.5,0.5 H217.5 M15.5,30.5 H217.5" stroke="#ff0000" stroke-width="1.2"/></svg><div class="a bar" style="left:335px;top:618px;background:none">Casablanca Hotelsoftware GmbH |ÜF|</div><div class="a bar" style="left:538px;top:618px;background:none">2</div>

<div class="a" style="left:360px;top:362px;width:1px;height:322px;background:#e3b53a;opacity:0.85"></div>
<div class="a" style="left:438px;top:265px;width:1px;height:419px;background:#e8bc3a;opacity:0.9"></div>
<div class="a" style="left:309px;top:208.5px;font-size:12.7px;font-weight:bold;color:#fff;line-height:16px">Freimeldung Sperre</div>

<!-- dropdown -->
<div class="a" style="left:873px;top:102px;width:5px;height:582px;background:linear-gradient(90deg,rgba(0,0,0,0.32),rgba(0,0,0,0.12) 50%,rgba(0,0,0,0))"></div>
<div class="a" style="left:589px;top:99px;width:285px;height:600px;background:#fafafa;border:1px solid #979797;border-radius:2px"></div>
<div class="a" style="left:613px;top:100px;width:1px;height:584px;background:#e2e3e4"></div>
<div class="a" style="left:614px;top:100px;width:1px;height:584px;background:#fff"></div>
<div class="a" style="left:591px;top:653px;width:281px;height:22px;border:1px solid #ebc455;border-radius:3px;background:linear-gradient(#fdf0c4,#fae6a0 25%,#f8d775 45%,#fbe5a4 70%,#fef8e6)"></div>
<div class="a mi" style="top:105px">Abgelaufene Optionen</div>
<div class="a mi" style="top:128px">A<u>b</u>reiseliste</div>
<div class="a mi" style="top:151px"><u>A</u>ngebotsliste</div>
<div class="a mi" style="top:174px">A<u>n</u>reiseliste</div>
<div class="a mi" style="top:197px"><u>A</u>ufgabenliste</div>
<div class="a mi" style="top:220px">Automailing</div>
<div class="a mi" style="top:243px">Belegung<u>s</u>rückschau detailiert</div>
<div class="a mi" style="top:266px">Be<u>l</u>egungsrückschau komprimiert</div>
<div class="a mi" style="top:289px">Belegungs<u>v</u>orschau detailiert</div>
<div class="a mi" style="top:312px">B<u>e</u>legungsvorschau komprimiert</div>
<div class="a mi" style="top:335px">Belegungs - Umsatzstatistik pro Zimmer</div>
<div class="a mi" style="top:358px;color:#6e6e6e">BonusCard Statistik</div>
<div class="a mi" style="top:381px"><u>D</u>ebitorenstatistik</div>
<div class="a mi" style="top:404px">G<u>ä</u>steliste</div>
<div class="a mi" style="top:427px"><u>G</u>eburtstagsliste</div>
<div class="a mi" style="top:450px"><u>G</u>eburtstagsliste anwesende Gäste</div>
<div class="a mi" style="top:473px"><u>K</u>urtaxeliste</div>
<div class="a mi" style="top:496px"><u>K</u>üchenliste</div>
<div class="a mi" style="top:519px"><u>M</u>anagementbericht</div>
<div class="a mi" style="top:542px"><u>M</u>arketingstatistik</div>
<div class="a mi" style="top:565px"><u>M</u>eldezettelliste</div>
<div class="a mi" style="top:588px"><u>N</u>ationalitätenstatistik</div>
<div class="a mi" style="top:611px"><u>O</u>ffene Anzahlungen</div>
<div class="a mi" style="top:634px">Reservierungsfixleistungen</div>
<div class="a mi" style="top:657px"><u>R</u>eservierungsliste</div>
<div class="a mi" style="top:680px">Sperrliste</div>
<svg class="a" style="left:741px;top:664px" width="13" height="20" viewBox="0 0 13 20">
<path d="M0.5,0.5 V16 L4,12.5 L6.8,18.5 L9,17.5 L6.3,11.5 H11.5 Z" fill="#fff" stroke="#000" stroke-width="1"/>
</svg>
</body></html>
